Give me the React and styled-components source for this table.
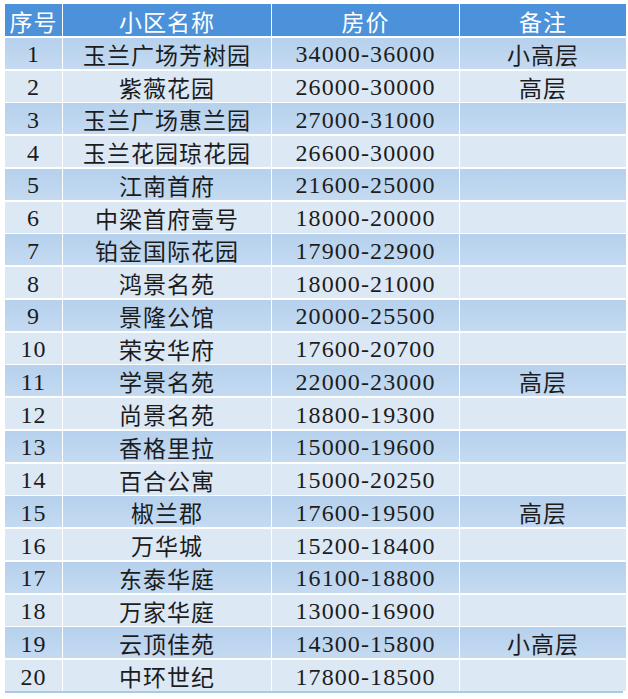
import React from 'react';
import styled, { createGlobalStyle } from 'styled-components';

const GlobalStyle = createGlobalStyle`
    html, body {
        margin: 0;
        padding: 0;
        background: #ffffff;
    }
`

const rows = [
    ['1', '玉兰广场芳树园', '34000-36000', '小高层'],
    ['2', '紫薇花园', '26000-30000', '高层'],
    ['3', '玉兰广场惠兰园', '27000-31000', ''],
    ['4', '玉兰花园琼花园', '26600-30000', ''],
    ['5', '江南首府', '21600-25000', ''],
    ['6', '中梁首府壹号', '18000-20000', ''],
    ['7', '铂金国际花园', '17900-22900', ''],
    ['8', '鸿景名苑', '18000-21000', ''],
    ['9', '景隆公馆', '20000-25500', ''],
    ['10', '荣安华府', '17600-20700', ''],
    ['11', '学景名苑', '22000-23000', '高层'],
    ['12', '尚景名苑', '18800-19300', ''],
    ['13', '香格里拉', '15000-19600', ''],
    ['14', '百合公寓', '15000-20250', ''],
    ['15', '椒兰郡', '17600-19500', '高层'],
    ['16', '万华城', '15200-18400', ''],
    ['17', '东泰华庭', '16100-18800', ''],
    ['18', '万家华庭', '13000-16900', ''],
    ['19', '云顶佳苑', '14300-15800', '小高层'],
    ['20', '中环世纪', '17800-18500', ''],
]

const Table = styled.div`
    margin: 4px 5px 0 5px;
    width: 618px;
    display: flex;
    flex-direction: column;
    gap: 1.75px;
    border-bottom: 2px solid #a9c8ea;
`

const Row = styled.div`
    display: grid;
    grid-template-columns: 57px 208px 187px 166px;
    column-gap: 1px;
    height: ${(p) => (p.$head ? '32px' : '31px')};
`

const Cell = styled.div`
    display: flex;
    align-items: center;
    justify-content: center;
    padding-top: 2px;
    line-height: 1;
    font-family: ${(p) =>
        p.$num
            ? '"Liberation Serif", "Times New Roman", "DejaVu Serif", serif'
            : '"Noto Sans CJK SC", "Noto Sans", sans-serif'};
    font-size: ${(p) => (p.$num ? '24px' : '23px')};
    letter-spacing: ${(p) => (p.$num ? '1.1px' : '1px')};
    color: ${(p) => (p.$head ? '#ffffff' : '#1c1c1c')};
    background: ${(p) =>
        p.$head
            ? '#4b92da'
            : p.$odd
                ? 'linear-gradient(#b6d1ed, #c4daf1)'
                : '#dde8f5'};
    white-space: nowrap;
`

function App() {
    return (
        <>
            <GlobalStyle />
            <Table>
                <Row $head>
                    <Cell $head>序号</Cell>
                    <Cell $head>小区名称</Cell>
                    <Cell $head>房价</Cell>
                    <Cell $head>备注</Cell>
                </Row>
                {rows.map((r, i) => (
                    <Row key={r[0]}>
                        <Cell $odd={i % 2 === 0} $num>{r[0]}</Cell>
                        <Cell $odd={i % 2 === 0}>{r[1]}</Cell>
                        <Cell $odd={i % 2 === 0} $num>{r[2]}</Cell>
                        <Cell $odd={i % 2 === 0}>{r[3]}</Cell>
                    </Row>
                ))}
            </Table>
        </>
    );
}

export default App;
